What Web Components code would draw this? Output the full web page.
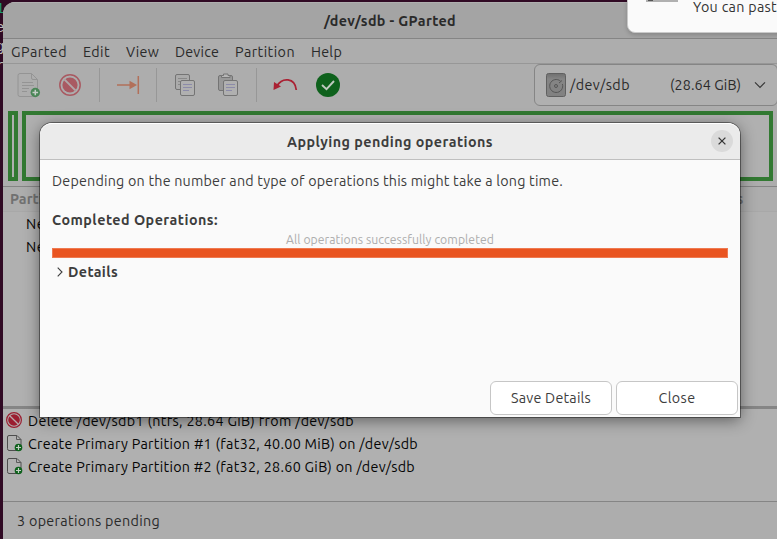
<!DOCTYPE html>
<html lang="en">
<head>
<meta charset="utf-8">
<title>/dev/sdb - GParted</title>
<style>
html,body{margin:0;width:777px;height:539px;overflow:hidden;background:#300a24}
body{font-family:Ubuntu,"Noto Sans","Open Sans",sans-serif;font-size:14.3px;color:#2a2a2a}
</style>
</head>
<body>
<desk-top></desk-top>
<script>
const define = (name, html, init) => customElements.define(name, class extends HTMLElement {
  connectedCallback() {
    if (this.shadowRoot) return;
    const root = this.attachShadow({ mode: 'open' });
    const t = document.createElement('template');
    t.innerHTML = html;
    root.appendChild(t.content.cloneNode(true));
    if (init) init(this, root);
  }
});

// A line of text whose tracking is adjusted to fill the width in `w`.
define('fit-text', `<style>
  :host{display:block;white-space:pre;line-height:20px;flex:none}
  span{display:inline-block}
</style><span><slot></slot></span>`, (el, root) => {
  const w = +el.getAttribute('w'), s = root.querySelector('span');
  el.style.width = w + 'px';
  const natural = s.getBoundingClientRect().width;
  const n = el.textContent.length;
  if (natural) s.style.letterSpacing = ((w - natural) / n) + 'px';
});

const icons = {
  doc: [24,26,`<g fill="none" stroke="#949494"><path d="M3 1.500H14.500L20.500 7.500V22.500Q20.500 24.500 18.500 24.500H3Q1 24.500 1 22.500V3.500Q1 1.500 3 1.500Z"/><path d="M14.500 1.500V6Q14.500 7.500 16 7.500H20.500"/><path d="M5 10.500H16M5 13.500H17M5 16.500H12M5 19.500H10"/></g><circle cx="18.300" cy="20.500" r="4.700" fill="#4a8657"/><path d="M15.500 20.500h5.600M18.300 17.700v5.600" stroke="#c5cec7" stroke-width="1.500"/>`],
  ban: [22,22,`<circle cx="11" cy="11" r="10.200" fill="none" stroke="#a95a62" stroke-width="1.500"/><circle cx="11" cy="11" r="7.600" fill="#a95a62"/><path d="M5.600 5.600L16.400 16.400" stroke="#b0a8a9" stroke-width="2"/>`],
  last: [23,18,`<path d="M0 9H15" stroke="#b2705a" stroke-width="1.600"/><path d="M12.500 4.700L20 9L12.500 13.300Z" fill="#b2705a"/><path d="M21.300 0V18" stroke="#b2705a" stroke-width="1.500"/>`],
  copy: [21,24,`<g fill="#aaa" stroke="#747474"><rect x=".5" y="1.500" width="14" height="15" rx="1.500"/><path d="M3 5.500h9M3 8.500h5M3 11.500h2" stroke="#898989"/><rect x="5.500" y="7.500" width="14" height="15" rx="1.500" fill="#b0b0b0"/></g><path d="M8 11.500h9M8 14.500h9M8 17.500h6" stroke="#8c8ba9"/>`],
  paste: [21,24,`<g fill="#989898" stroke="#747474"><rect x=".5" y="2.500" width="14" height="15" rx="1.500"/><path d="M3.500 4.500V2.500H5.500V1H10V2.500H12V4.500Z" fill="#b6b6b6"/><rect x="5.500" y="7.500" width="14" height="15" rx="1.500" fill="#b0b0b0"/></g><path d="M8 11.500h9M8 14.500h9M8 17.500h6" stroke="#8c8ba9"/>`],
  undo: [25,14,`<path d="M4 8C9-.8 22-.6 23.300 12" fill="none" stroke="#aa2133" stroke-width="1.800"/><path d="M1 4L.5 12L8 8.600Z" fill="#aa2133"/>`],
  ok: [24,24,`<circle cx="12" cy="12" r="12" fill="#0e611c"/><path d="M6 12L10.500 16.200L18 8" fill="none" stroke="#bfc9c0" stroke-width="1.900"/>`],
  disk: [20,24,`<defs><linearGradient id="g" x2="0" y2="1"><stop stop-color="#707070"/><stop offset=".25" stop-color="#858585"/><stop offset="1" stop-color="#818181"/></linearGradient></defs><rect x=".5" y=".5" width="19" height="23" rx="2" fill="url(#g)" stroke="#606060"/><path d="M14.500 8.100A6.500 6.500 0 1 0 16.400 11" fill="none" stroke="#575757"/><path d="M13 10L16 7.500" stroke="#575757"/><circle cx="10" cy="13" r="1.500" fill="none" stroke="#575757"/>`],
  down: [12,8,`<path d="M1 1.300L6 6.300L11 1.300" fill="none" stroke="#383838" stroke-width="1.200"/>`],
  del: [16,16,`<circle cx="8" cy="8" r="7.400" fill="none" stroke="#9b1d30" stroke-width="1.200"/><circle cx="8" cy="8" r="5.800" fill="#9b1d30"/><path d="M3.700 3.700L12.300 12.300" stroke="#b9a8ab" stroke-width="1.300"/>`],
  add: [16,17,`<path d="M2 .5H10L14 4.500V13.500Q14 15.500 12 15.500H2Q.5 15.500 .5 13.500V2Q.5 .5 2 .5Z" fill="#b1b1b1" stroke="#4d4d4d"/><path d="M9.500 .5V4.500H14" fill="none" stroke="#5c5c5c"/><circle cx="11.500" cy="12.500" r="3.800" fill="#0e611c"/><path d="M9 12.500h5M11.500 10v5" stroke="#c3cec4" stroke-width="1.200"/>`],
  close: [8,8,`<path d="M.6 .6L7.400 7.400M7.400 .6L.6 7.400" stroke="#363636" stroke-width="1.300"/>`],
  right: [6,10,`<path d="M.7 .6L5 5L.7 9.400" fill="none" stroke="#3d3d3d" stroke-width="1.100"/>`]
};
define('gp-icon', `<style>:host{display:block;flex:none}svg{display:block}</style>`, (el, root) => {
  const [w, h, body] = icons[el.getAttribute('name')];
  const t = document.createElement('template');
  t.innerHTML = `<svg width="${w}" height="${h}" viewBox="0 0 ${w} ${h}">${body}</svg>`;
  root.appendChild(t.content);
});

define('title-bar', `<style>:host{display:flex;align-items:center;justify-content:center;font-weight:bold;flex:none;box-sizing:border-box}</style><slot></slot>`);

define('menu-bar', `<style>:host{display:flex;gap:16px;padding:3px 8px 0;box-sizing:border-box;border-bottom:1px solid #979797;height:25px;flex:none}</style>
<fit-text w="56">GParted</fit-text><fit-text w="27">Edit</fit-text><fit-text w="33">View</fit-text><fit-text w="44">Device</fit-text><fit-text w="60">Partition</fit-text><fit-text w="31">Help</fit-text>`);

define('device-combo', `<style>:host{box-sizing:border-box;display:flex;align-items:center;width:244px;height:42px;border:1px solid #858585;border-radius:6px;background:#b0b0b0;padding-left:11px;flex:none}
.size{margin-left:40px}.down{margin-left:13px}.name{margin-left:4px}</style>
<gp-icon name="disk"></gp-icon><fit-text class="name" w="60">/dev/sdb</fit-text><fit-text class="size" w="71">(28.64 GiB)</fit-text><gp-icon class="down" name="down"></gp-icon>`);

define('tool-bar', `<style>:host{display:flex;align-items:flex-start;height:47px;flex:none}
.c{height:42px;display:flex;align-items:center;justify-content:center;flex:none}
i{width:1px;height:34px;margin-top:4px;background:#979797;flex:none}
device-combo{margin:0 -1px 0 auto}</style>
<div class="c" style="width:52px"><gp-icon name="doc"></gp-icon></div><div class="c" style="width:30px"><gp-icon name="ban"></gp-icon></div><div class="c" style="width:14px"></div>
<i></i><div class="c" style="width:56px"><gp-icon name="last"></gp-icon></div><i></i>
<div class="c" style="width:57px"><gp-icon name="copy"></gp-icon></div><div class="c" style="width:29px"><gp-icon name="paste"></gp-icon></div><div class="c" style="width:13px"></div>
<i></i><div class="c" style="width:57px"><gp-icon name="undo"></gp-icon></div><div class="c" style="width:28px"><gp-icon name="ok"></gp-icon></div>
<device-combo></device-combo>`);

define('disk-map', `<style>:host{display:flex;gap:4px;height:70px;padding:0 4px 5px 5px;flex:none}
div{box-sizing:border-box;border:4px solid #327932;background:#b0b0b0}.a{width:10px}.b{flex:1}</style><div class="a"></div><div class="b"></div>`);

define('partition-table', `<style>:host{display:block;height:219px;border-top:1px solid #858585;background:#b0b0b0;flex:none;color:#050505}
.h{display:flex;justify-content:space-between;height:25px;padding:2px 33px 0 7px;box-sizing:border-box;border-bottom:1px solid #a8a8a8;font-weight:bold;color:#717171;background:#adadad}
.r{height:23px;padding-left:23px;box-sizing:border-box;padding-top:2px}</style>
<div class="h"><fit-text w="60">Partition</fit-text><fit-text w="39">Flags</fit-text></div>
<div class="r"><fit-text w="19">Ne</fit-text></div><div class="r"><fit-text w="19">Ne</fit-text></div>`);

define('operation-list', `<style>:host{display:block;border-top:3px solid #858585;border-bottom:1px solid #858585;background:#b0b0b0;padding-left:4px;box-sizing:border-box;height:96px;color:#050505;flex:none}
.r{height:23px;display:flex;align-items:center}.i{width:21px;display:flex;flex:none}.first{margin-left:-1px;width:22px}.first gp-icon{margin-top:-2px}</style>
<div class="r"><div class="i first"><gp-icon name="del"></gp-icon></div><fit-text w="326">Delete /dev/sdb1 (ntfs, 28.64 GiB) from /dev/sdb</fit-text></div>
<div class="r"><div class="i"><gp-icon name="add"></gp-icon></div><fit-text w="390">Create Primary Partition #1 (fat32, 40.00 MiB) on /dev/sdb</fit-text></div>
<div class="r"><div class="i"><gp-icon name="add"></gp-icon></div><fit-text w="387">Create Primary Partition #2 (fat32, 28.60 GiB) on /dev/sdb</fit-text></div>`);

define('gparted-window', `<style>:host{display:flex;flex-direction:column;margin:2px 0 0 3px;width:774px;height:537px;box-sizing:border-box;background:#adadad;border-radius:12px 0 0 0;overflow:hidden}
title-bar{height:37px;background:#a4a4a4;border-top:1px solid #afafaf;border-bottom:1px solid #858585}
.s{padding:9px 14px}</style>
<title-bar><fit-text w="132">/dev/sdb - GParted</fit-text></title-bar>
<menu-bar></menu-bar><tool-bar></tool-bar><disk-map></disk-map><partition-table></partition-table><operation-list></operation-list>
<div class="s"><fit-text w="143">3 operations pending</fit-text></div>`);

define('dialog-button', `<style>:host{display:flex;align-items:center;justify-content:center;box-sizing:border-box;width:122px;height:34px;border:1px solid #c6c6c6;border-radius:6px;background:#fff}</style><slot></slot>`);

define('apply-dialog', `<style>:host{position:absolute;left:40px;top:123px;width:700px;height:294px;box-sizing:border-box;background:#fafafa;border-radius:12px 12px 0 0;box-shadow:0 0 0 1px rgba(0,0,0,.4),0 3px 16px rgba(0,0,0,.48);display:flex;flex-direction:column;color:#3d3d3d}
title-bar{height:37px;background:#ebebeb;border-radius:12px 12px 0 0;border-top:1px solid #fff;border-bottom:1px solid #bfbfbf}
.x{position:absolute;right:7px;top:7px;width:22px;height:22px;border-radius:50%;background:#dadada;display:flex;align-items:center;justify-content:center}
.b{padding:11px 12px 0;flex:1}.c{margin-top:19px;font-weight:bold}
.p{font-size:12.2px;color:#adadad;display:flex;justify-content:center;height:18px}
.bar{height:10px;box-sizing:border-box;background:#e95420;border:1px solid #ee7950}
.d{display:flex;align-items:center;font-weight:bold;padding-left:5px;gap:5px;margin-top:4px}
.f{display:flex;justify-content:flex-end;gap:4px;padding:0 2px 2px}</style>
<title-bar><fit-text w="206">Applying pending operations</fit-text></title-bar><div class="x"><gp-icon name="close"></gp-icon></div>
<div class="b"><fit-text w="511">Depending on the number and type of operations this might take a long time.</fit-text>
<fit-text class="c" w="166">Completed Operations:</fit-text>
<div class="p"><fit-text w="208">All operations successfully completed</fit-text></div><div class="bar"></div>
<div class="d"><gp-icon name="right"></gp-icon><fit-text w="50">Details</fit-text></div></div>
<div class="f"><dialog-button><fit-text w="80">Save Details</fit-text></dialog-button><dialog-button><fit-text w="37">Close</fit-text></dialog-button></div>`);

define('toast-card', `<style>:host{position:absolute;left:627px;top:-40px;width:180px;height:73px;box-sizing:border-box;background:#fafafa;border:1px solid #c9c9c9;border-radius:8px;box-shadow:0 2px 4px rgba(0,0,0,.18);display:flex;align-items:flex-end;color:#333}
.g{width:32px;height:20px;margin:0 0 30px 18px;background:#b0b0b0;position:relative;flex:none}.g:after{content:"";position:absolute;left:2px;bottom:1px;width:5px;height:1px;background:#555}
fit-text{margin:0 0 15px 15px}</style><div class="g"></div><fit-text w="84">You can past</fit-text>`);

define('terminal-strip', `<style>:host{position:absolute;left:0;top:0;width:5px;height:539px;overflow:hidden;background:#300a24;color:#bbb;font:14px/19px "Liberation Mono",monospace}
pre{margin:0 0 0 -4px;font:inherit}.a{color:#20996a}</style><pre><span class="a">1</span>
e
g
r</pre>`);

define('desk-top', `<style>:host{display:block;position:relative;width:777px;height:539px;overflow:hidden;background:#300a24;padding-top:2px;box-sizing:border-box}gparted-window{position:relative;margin-top:0}</style>
<terminal-strip></terminal-strip><gparted-window></gparted-window><apply-dialog></apply-dialog><toast-card></toast-card>`);
</script>
</body>
</html>
